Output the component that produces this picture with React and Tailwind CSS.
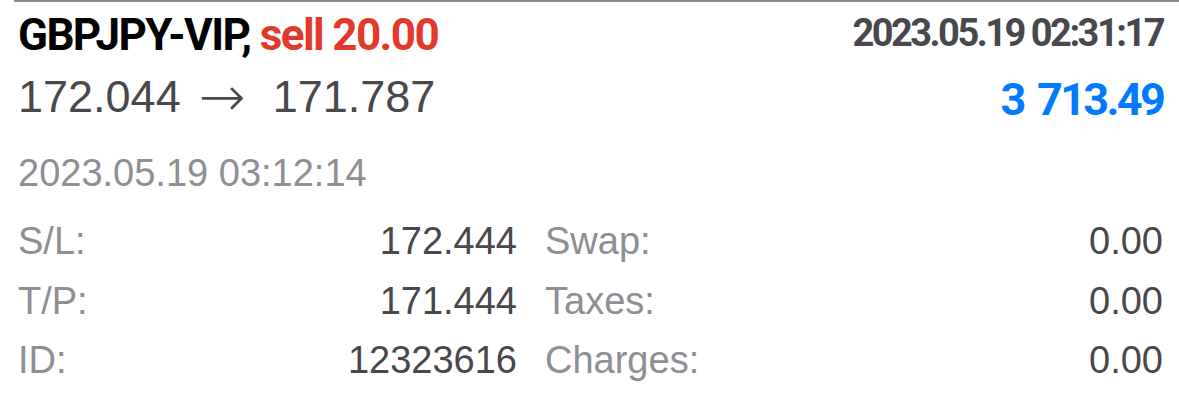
const details = [
  { label: 'S/L:', value: '172.444', label2: 'Swap:', value2: '0.00' },
  { label: 'T/P:', value: '171.444', label2: 'Taxes:', value2: '0.00' },
  { label: 'ID:', value: '12323616', label2: 'Charges:', value2: '0.00' },
];

const App = () => {
  return (
    <div className="w-[1179px] h-[406px] bg-white overflow-hidden">
      {/* separator from the previous item */}
      <div className="h-[2px] ml-[14px] bg-[#8c8c8c]" />

      <div className="pl-[18px] pr-[16px]">
        {/* symbol + open time */}
        <div className="h-[60px] flex justify-between items-start">
          <div className="mt-[11px] font-['Roboto',sans-serif] font-bold text-[44px] leading-none tracking-[-1.6px] text-black whitespace-nowrap">
            GBPJPY-VIP, <span className="text-[#e3392b]">sell 20.00</span>
          </div>
          <div className="mt-[12px] font-['Roboto',sans-serif] font-bold text-[38px] leading-none tracking-[-2.5px] text-[#48484c] whitespace-nowrap">
            2023.05.19 02:31:17
          </div>
        </div>

        {/* prices + profit */}
        <div className="h-[68px] flex justify-between items-start">
          <div className="mt-[12px] h-[45px] flex items-center font-['Liberation_Sans',Arial,sans-serif] text-[45px] leading-none text-[#48484c] whitespace-nowrap">
            <span>172.044</span>
            <span className="w-[46px] ml-[18px] mr-[28px] text-center font-['DejaVu_Sans',sans-serif] font-extralight text-[56px] leading-none">→</span>
            <span>171.787</span>
          </div>
          <div className="mt-[15px] font-['Roboto',sans-serif] font-bold text-[45px] leading-none tracking-[-2.7px] [word-spacing:5px] text-[#007aff] whitespace-pre">
            3 713.49
          </div>
        </div>

        {/* close time */}
        <div className="h-[70px]">
          <div className="pt-[24px] font-['Liberation_Sans',Arial,sans-serif] text-[38px] leading-none text-[#8e8e93]">
            2023.05.19 03:12:14
          </div>
        </div>

        {/* details */}
        <div className="mt-[12px] font-['Liberation_Sans',Arial,sans-serif] text-[38px] leading-[59.5px]">
          {details.map((row) => (
            <div key={row.label} className="flex">
              <div className="w-[499px] flex justify-between">
                <span className="text-[#8e8e93]">{row.label}</span>
                <span className="text-[#48484c]">{row.value}</span>
              </div>
              <div className="ml-[28px] flex-1 flex justify-between">
                <span className="text-[#8e8e93]">{row.label2}</span>
                <span className="text-[#48484c]">{row.value2}</span>
              </div>
            </div>
          ))}
        </div>
      </div>
    </div>
  );
};

export default App;
